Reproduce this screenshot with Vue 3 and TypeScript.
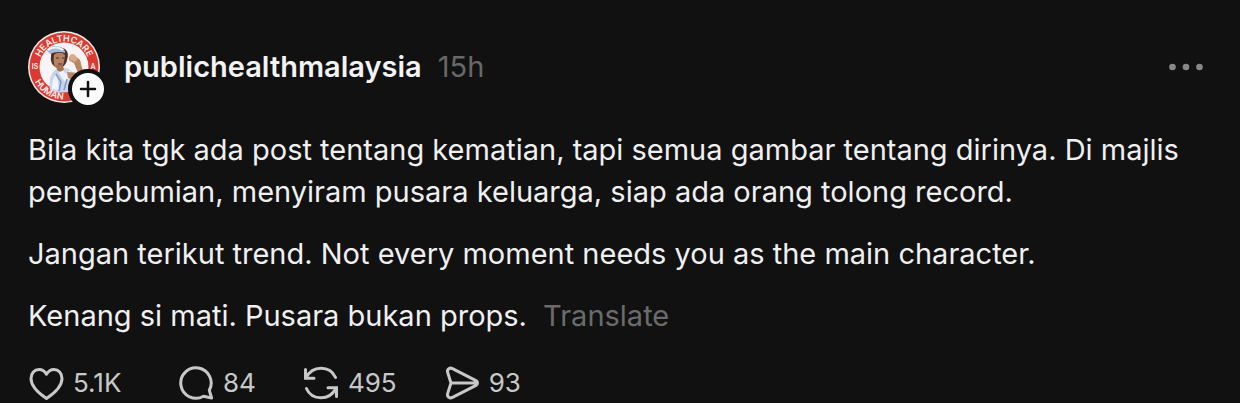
<script setup lang="ts">
interface Action {
  id: 'like' | 'reply' | 'repost' | 'share'
  label: string
  count: string
}

const actions: Action[] = [
  { id: 'like', label: 'Like', count: '5.1K' },
  { id: 'reply', label: 'Reply', count: '84' },
  { id: 'repost', label: 'Repost', count: '495' },
  { id: 'share', label: 'Share', count: '93' },
]
</script>

<template>
  <article class="post">
    <header class="head">
      <div class="avatar">
        <svg class="portrait" viewBox="0 0 72 72" aria-hidden="true">
          <defs>
            <path id="ring-top" d="M10.5 36a25.5 25.5 0 0 1 51 0" />
            <path id="ring-bottom" d="M3.500 36a32.500 32.500 0 0 0 65 0" />
          </defs>
          <circle cx="36" cy="36" r="36" fill="#f3e9e6" />
          <circle cx="36" cy="36" r="34.500" fill="#dc3a31" />
          <circle cx="36" cy="36" r="24.500" fill="#f6f4f5" />
          <path d="M22 59c-1-8 0-16 5-20l6-3 8 2 6 5 3 15c-8 4-20 5-28 1z" fill="#c9d5ee" />
          <path d="M24 58c0-7 1-12 5-15l2 16zM33 37l5 6 4-4 3 6-8 6-6-9z" fill="#eef3fc" />
          <path d="M28 43l5 8-2 9M39 48l-3 11" fill="none" stroke="#7f96c9" stroke-width="1.500" />
          <path d="M39 41c4 0 8 1 11 1l-4-10-4-2c-2-2-1-5 2-5l4 1c3 1 5 4 5 7l3 10c0 4-3 7-7 7l-9-3z" fill="#b98661" />
          <path d="M41 26c1-3 4-4 6-2l3 4-3 3-5-2z" fill="#dba982" />
          <path d="M23 25c0-7 5-9 11-8 6 1 7 7 5 12-1 5-5 9-9 8-5-1-8-6-7-12z" fill="#4a302b" />
          <path d="M26 24c3-3 8-3 11 0l-1 7c-1 4-3 7-6 6-4 0-5-6-4-13z" fill="#b98263" />
          <path d="M28 34l1 5c3 3 6 1 7-1l-2-4z" fill="#a87152" />
          <path d="M28 27h3m3 0h2M30 33h4" stroke="#533129" stroke-width="1" />
          <path d="M19 20c1-4 7-6 14-4 3 1 4 3 4 6-5-2-11-1-15 1z" fill="#a9bad8" />
          <path d="M20 19c4-3 10-3 15 0" fill="none" stroke="#edf3ff" stroke-width="2" />
          <text class="ring-text">
            <textPath href="#ring-top" startOffset="50%" text-anchor="middle">HEALTHCARE</textPath>
          </text>
          <text class="ring-text">
            <textPath href="#ring-bottom" startOffset="32%" text-anchor="middle">HUMAN</textPath>
          </text>
          <text class="ring-text side" x="7" y="38" text-anchor="middle">IS</text>
          <text class="ring-text side" x="65" y="38" text-anchor="middle">A</text>
        </svg>
        <button class="follow" type="button" aria-label="Follow publichealthmalaysia">
          <svg viewBox="0 0 32 32" aria-hidden="true">
            <path d="M16 9v14M9 16h14" fill="none" stroke="#111" stroke-width="2.500" stroke-linecap="round" />
          </svg>
        </button>
      </div>
      <a class="name" href="#publichealthmalaysia">publichealthmalaysia</a>
      <time class="age">15h</time>
      <button class="more" type="button" aria-label="More">
        <svg viewBox="0 0 36 8" aria-hidden="true">
          <circle cx="4.500" cy="4" r="3.300" />
          <circle cx="18" cy="4" r="3.300" />
          <circle cx="31.500" cy="4" r="3.300" />
        </svg>
      </button>
    </header>

    <div class="body">
      <p>Bila kita tgk ada post tentang kematian, tapi semua gambar tentang dirinya. Di majlis pengebumian, menyiram pusara keluarga, siap ada orang tolong record.</p>
      <p>Jangan terikut trend. Not every moment needs you as the main character.</p>
      <p>Kenang si mati. Pusara bukan props. <button class="translate" type="button">Translate</button></p>
    </div>

    <footer class="actions">
      <button v-for="a in actions" :key="a.id" class="action" type="button" :aria-label="`${a.label}, ${a.count}`">
        <svg viewBox="0 0 36 36" aria-hidden="true">
          <path v-if="a.id === 'like'" d="M18.500 33.500C14 30.500 3 23 3 13.500 3 8 6.500 4.500 11 4.500c3.500 0 6 2 7.500 4.800C20 6.500 22.500 4.500 26 4.500c4.500 0 8 3.500 8 9 0 9.500-11 17-15.500 20z" />
          <path v-else-if="a.id === 'reply'" d="M31.300 25.300A15.200 15.200 0 1 0 25.500 31.200L33.600 33z" />
          <g v-else-if="a.id === 'repost'">
            <path d="M3 12.800C6 7 11.500 3.200 18 3.200c6.500 0 12 3.600 14.600 9.300" />
            <path d="M2.500 4.500v8.800H11" stroke-linejoin="miter" />
            <path d="M33 23.200C30 29 24.500 32.800 18 32.800c-6.500 0-12-3.600-14.600-9.300" />
            <path d="M33.500 31.500v-8.800H25" stroke-linejoin="miter" />
          </g>
          <path v-else d="M8.500 3.600 32 15.700c2 1 2 3.600 0 4.600L8.500 32.400c-3 1.500-5.800-1-4.800-4L7 18 3.700 7.600c-1-3 1.800-5.500 4.800-4zM7 18h26" />
        </svg>
        <span>{{ a.count }}</span>
      </button>
    </footer>
  </article>
</template>

<style>
html,
body {
  background: #111;
}
</style>

<style scoped>
.post {
  box-sizing: border-box;
  padding: 31px 28px 0;
  overflow: hidden;
  background: #111;
  color: #f0f0f0;
  font-family: Inter, "Liberation Sans", sans-serif;
  font-size: 29px;
  line-height: 42px;
}

button {
  padding: 0;
  border: 0;
  background: none;
  color: inherit;
  font: inherit;
  cursor: pointer;
}

svg {
  display: block;
}

.head {
  display: flex;
  align-items: center;
  padding-right: 8px;
}

.avatar {
  position: relative;
  flex: none;
  width: 72px;
  height: 72px;
  margin-right: 24px;
}

.portrait {
  width: 100%;
  height: 100%;
}

.ring-text {
  fill: #fff0ec;
  font-size: 9px;
  font-weight: 600;
}

.side {
  font-size: 7px;
}

.follow {
  position: absolute;
  right: -8px;
  bottom: -6px;
  border: 4px solid #111;
  border-radius: 50%;
  background: #fff;
}

.follow svg {
  width: 32px;
  height: 32px;
}

.name {
  color: #f3f3f3;
  font-weight: 600;
  text-decoration: none;
}

.age {
  margin-left: 16px;
  color: #686868;
}

.more {
  margin-left: auto;
}

.more svg {
  width: 36px;
  height: 8px;
  fill: #888;
}

.body {
  display: flex;
  flex-direction: column;
  gap: 20px;
  margin-top: 26px;
}

p {
  margin: 0;
}

.translate {
  margin-left: 8px;
  color: #6b6b6b;
}

.actions {
  display: flex;
  gap: 47px;
  margin-top: 28px;
}

.action {
  display: flex;
  align-items: center;
  gap: 9px;
  color: #c8c8c8;
  font-size: 26px;
  line-height: 36px;
}

.action:first-child {
  min-width: 103px;
}

.action svg {
  width: 36px;
  height: 36px;
  fill: none;
  stroke: currentColor;
  stroke-width: 3;
  stroke-linecap: round;
  stroke-linejoin: round;
}
</style>
